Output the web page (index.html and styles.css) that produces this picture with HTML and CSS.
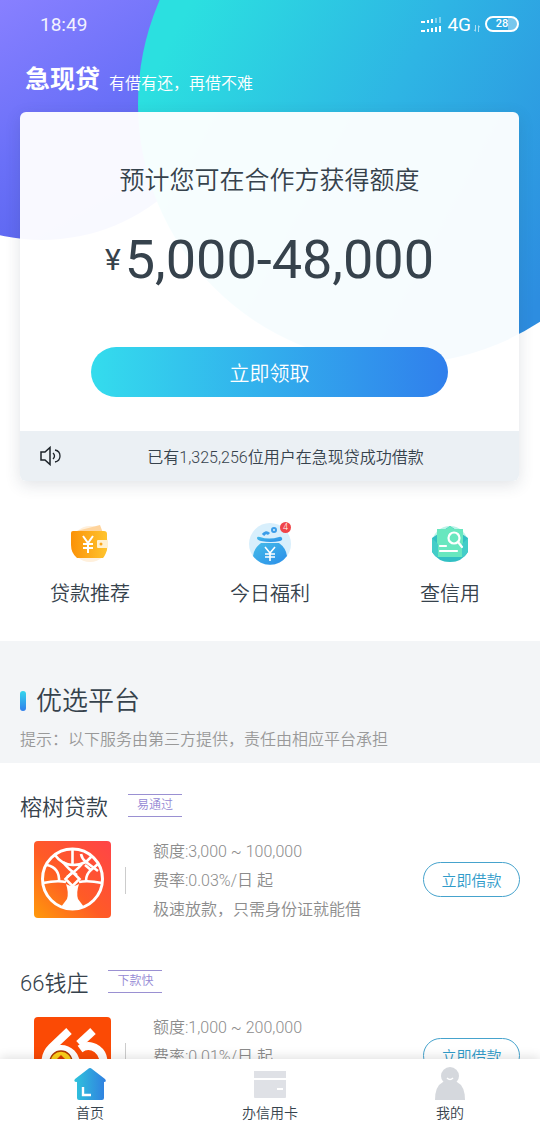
FILE: index.html
```
<!DOCTYPE html>
<html lang="zh-CN">
<head>
    <meta charset="UTF-8">
    <meta name="viewport" content="width=device-width, initial-scale=1.0">
    <title>急现贷</title>
    <link rel="stylesheet" href="styles.css">
</head>
<body>
    <main class="content">
        <!-- Background circles -->
        <svg class="hero-bg" viewBox="0 0 540 380" aria-hidden="true">
            <defs>
                <linearGradient id="purple" gradientUnits="userSpaceOnUse" x1="0" y1="0" x2="130" y2="220">
                    <stop offset="0" stop-color="#8880ff"/>
                    <stop offset="0.55" stop-color="#6a70f8"/>
                    <stop offset="1" stop-color="#5965ee"/>
                </linearGradient>
                <linearGradient id="cyan" gradientUnits="userSpaceOnUse" x1="165" y1="50" x2="560" y2="260">
                    <stop offset="0" stop-color="#2be0e0"/>
                    <stop offset="0.5" stop-color="#2eb5e4"/>
                    <stop offset="1" stop-color="#2d8de0"/>
                </linearGradient>
            </defs>
            <circle cx="42" cy="49" r="191" fill="url(#purple)"/>
            <circle cx="398" cy="104" r="260" fill="url(#cyan)"/>
        </svg>

        <div class="hero">
            <div class="status">
                <span class="clock">18:49</span>
                <div class="status-right">
                    <svg width="22" height="16" viewBox="0 0 22 16" fill="#fff" aria-hidden="true">
                        <path d="M1 5h4v2h-4zM7 4h2v3h-2zM11 3h2v4h-2zM1 14h4v2h-4zM7 13h2v3h-2zM11 12h2v4h-2zM15 11h2v5h-2zM19 10h2v6h-2z"/>
                        <path d="M15 2h2v5h-2zM19 1h2v6h-2z" opacity="0.4"/>
                    </svg>
                    <span class="net">4G</span>
                    <svg class="arrows" width="6" height="7" viewBox="0 0 6 7" fill="none" stroke="#fff" opacity="0.6" aria-hidden="true">
                        <path d="M1.500 0v6M0 4.500l1.500 2M4.500 7V1M6 2.500l-1.500-2"/>
                    </svg>
                    <span class="battery">28</span>
                </div>
            </div>

            <header class="brand">
                <h1>急现贷</h1>
                <p>有借有还，再借不难</p>
            </header>

            <section class="card">
                <div class="card-body">
                    <h2>预计您可在合作方获得额度</h2>
                    <p class="amount"><span>¥</span>5,000-48,000</p>
                    <button class="btn-main" type="button">立即领取</button>
                </div>
                <div class="notice">
                    <svg width="22" height="20" viewBox="0 0 22 20" fill="none" stroke="#1d2329" stroke-width="1.500" aria-hidden="true">
                        <path d="M1 6h4l5-4.500v17L5 14H1z"/>
                        <path d="M13 7q3 3 0 6M15 4q5 1 5 6t-5 6" stroke-width="1.300"/>
                    </svg>
                    <p>已有1,325,256位用户在急现贷成功借款</p>
                </div>
            </section>
        </div>

        <nav class="quick">
            <a href="#loan">
                <svg width="42" height="42" viewBox="0 0 42 42" aria-hidden="true">
                    <defs>
                        <linearGradient id="orange" x1="0" x2="1">
                            <stop offset="0" stop-color="#fb9208"/>
                            <stop offset="1" stop-color="#ffc42e"/>
                        </linearGradient>
                    </defs>
                    <circle cx="21" cy="21" r="18" fill="#fff0dc"/>
                    <path d="M4 9L31 2l3 8H6z" fill="#ffd49c"/>
                    <path d="M4 8h31q3 0 3 3v16q-2 6-4 8H8q-6-5-6-13V10q0-2 2-2z" fill="url(#orange)"/>
                    <rect x="28" y="17" width="11" height="8" rx="1" fill="#fff0d0"/>
                    <circle cx="32" cy="21" r="1.500" fill="#f9a51a"/>
                    <path d="M14 13l5 7 5-7M19 20v10M14 21h10M14 25h10" fill="none" stroke="#fff" stroke-width="2"/>
                </svg>
                贷款推荐
            </a>
            <a href="#welfare">
                <span class="icon-wrap">
                    <svg width="42" height="42" viewBox="0 0 42 42" aria-hidden="true">
                        <defs>
                            <linearGradient id="blue" x1="0" y1="0" x2="1" y2="1">
                                <stop offset="0" stop-color="#45bce9"/>
                                <stop offset="1" stop-color="#2a8de9"/>
                            </linearGradient>
                        </defs>
                        <circle cx="21" cy="21" r="21" fill="#d8effc"/>
                        <path d="M11 14q9 3 19 0q2-1 3 1t-2 3q-9 2-19 0q-4-1-4-3t3-1z" fill="url(#blue)"/>
                        <path d="M12 20h18q7 5 8 13a21 21 0 0 1-34 0q1-8 8-13z" fill="url(#blue)"/>
                        <path d="M14 12q3-4 6-1" fill="none" stroke="#3b9de9" stroke-width="3"/>
                        <circle cx="25" cy="7" r="2" fill="none" stroke="#3b9de9" stroke-width="2"/>
                        <path d="M16 24l5 6 5-6M21 30v8M16 31h10M16 34h10" fill="none" stroke="#fff" stroke-width="1.600"/>
                    </svg>
                    <span class="badge">4</span>
                </span>
                今日福利
            </a>
            <a href="#credit">
                <svg width="42" height="42" viewBox="0 0 42 42" aria-hidden="true">
                    <circle cx="21" cy="21" r="18" fill="#bdf4e8"/>
                    <path d="M3 15l18-12 18 12v14q-6 10-18 10T3 29z" fill="#32bfc4"/>
                    <path d="M8 6h9l4-3 4 3h9v28H8z" fill="#68e7bf"/>
                    <path d="M3 15l6 6v14q-6-4-6-8zM39 15l-6 6v14q6-4 6-8z" fill="#43cdc8"/>
                    <circle cx="25" cy="15" r="5.500" fill="none" stroke="#fff" stroke-width="2.200"/>
                    <path d="M29 19l4 5M11 23h6M11 28h17" stroke="#fff" stroke-width="2.200" stroke-linecap="round"/>
                </svg>
                查信用
            </a>
        </nav>

        <section class="section-head">
            <h2>优选平台</h2>
            <p>提示：以下服务由第三方提供，责任由相应平台承担</p>
        </section>

        <ul class="list">
            <li class="item">
                <div class="item-title">
                    <h3>榕树贷款</h3>
                    <span class="tag">易通过</span>
                </div>
                <div class="item-row">
                    <svg class="logo" viewBox="0 0 77 77" aria-hidden="true">
                        <defs>
                            <linearGradient id="fire" x1="0" y1="1" x2="1" y2="0">
                                <stop offset="0" stop-color="#ff9a0a"/>
                                <stop offset="0.45" stop-color="#ff5b26"/>
                                <stop offset="1" stop-color="#ff4448"/>
                            </linearGradient>
                        </defs>
                        <rect width="77" height="77" rx="4" fill="url(#fire)"/>
                        <g fill="none" stroke="#fff" stroke-width="2.600">
                            <circle cx="38.500" cy="38" r="30" stroke-width="3"/>
                            <path d="M38.500 31l7 7-7 7-7-7z"/>
                            <path d="M9 42q14-3 23-1M68 42q-14-3-23-1"/>
                            <path d="M13 24q13 3 12 17"/>
                            <path d="M21 14q7 10 18 10 7 0 13-3"/>
                            <path d="M38.500 8v16M29 21Q34 28 43 34M48 23Q43 29 33 36"/>
                            <path d="M52 40q0-7 5-11l7-6M47 13q1 5 5 8l12 9"/>
                            <path d="M52 21l6-6M57 29l-6-5"/>
                        </g>
                        <path d="M32 43q3 2 6.500 2 3.500 0 6.500-2-3 9-1 15l6 8q-12 4-23 0l6-8q2-6-1-15z" fill="#fff"/>
                    </svg>
                    <div class="info">
                        <p>额度:3,000 ~ 100,000</p>
                        <p>费率:0.03%/日 起</p>
                        <p>极速放款，只需身份证就能借</p>
                    </div>
                    <button class="btn-loan" type="button">立即借款</button>
                </div>
            </li>
            <li class="item">
                <div class="item-title">
                    <h3>66钱庄</h3>
                    <span class="tag">下款快</span>
                </div>
                <div class="item-row">
                    <svg class="logo" viewBox="0 0 77 77" aria-hidden="true">
                        <rect width="77" height="77" rx="4" fill="#fb4a05"/>
                        <g fill="none" stroke="#fff" stroke-width="8">
                            <path d="M59 14L45 27"/>
                            <path d="M46 32q8-6 17 0 8 6 6 17-3 12-15 12"/>
                            <path d="M35 14L18 30Q10 38 12 48"/>
                            <circle cx="27" cy="47" r="15"/>
                        </g>
                        <circle cx="27" cy="45" r="11" fill="#ffd21c" stroke="#b03a00" stroke-width="1.500"/>
                        <path d="M27 38l5 5-5 5-5-5z" fill="#d93a00"/>
                    </svg>
                    <div class="info">
                        <p>额度:1,000 ~ 200,000</p>
                        <p>费率:0.01%/日 起</p>
                    </div>
                    <button class="btn-loan" type="button">立即借款</button>
                </div>
            </li>
        </ul>
    </main>

    <nav class="tabbar">
        <a href="#home">
            <svg width="32" height="34" viewBox="0 0 32 34" aria-hidden="true">
                <defs>
                    <linearGradient id="home" x1="0" x2="1">
                        <stop offset="0" stop-color="#2fc4dc"/>
                        <stop offset="1" stop-color="#307fe0"/>
                    </linearGradient>
                </defs>
                <path d="M14 2q2-2 4 0l13 10q2 3-1 3v16q0 2-2 2H5q-2 0-2-2V15q-4 0-2-3z" fill="url(#home)"/>
                <path d="M9 20v8h8" fill="none" stroke="#fff" stroke-width="2.400"/>
            </svg>
            首页
        </a>
        <a href="#card">
            <svg width="32" height="34" viewBox="0 0 32 34" fill="#dfe1e6" aria-hidden="true">
                <path d="M0 4h32v7H0z"/>
                <path d="M0 13h32v17q0 1-1 1H1q-1 0-1-1z"/>
                <path d="M23 21h6v2h-6z" fill="#fff"/>
            </svg>
            办信用卡
        </a>
        <a href="#me">
            <svg width="32" height="34" viewBox="0 0 32 34" fill="#d5d8dd" aria-hidden="true">
                <circle cx="16" cy="9" r="9"/>
                <path d="M9 15h14q8 4 8 18H1Q1 19 9 15z"/>
                <path d="M13 11q3 3 6 0" fill="none" stroke="#fff" stroke-width="1.500"/>
            </svg>
            我的
        </a>
    </nav>
</body>
</html>
```
FILE: styles.css
```
* {
    box-sizing: border-box;
}

body {
    margin: 0;
    height: 100vh;
    display: flex;
    flex-direction: column;
    font-family: Roboto, "Noto Sans CJK SC", sans-serif;
    font-weight: 350;
    color: #36424c;
    background: #fff;
}

h1, h2, h3, p, ul {
    margin: 0;
    padding: 0;
    font-weight: 350;
}

a {
    color: inherit;
    text-decoration: none;
}

button {
    font-family: inherit;
    font-weight: 350;
    padding: 0;
    cursor: pointer;
}

.content {
    position: relative;
    flex: 1;
    min-height: 0;
    overflow-y: auto;
    scrollbar-width: none;
}

.hero-bg {
    position: absolute;
    top: 0;
    left: 0;
    width: 100%;
}

.hero {
    position: relative;
    padding: 0 21px 0 20px;
}

.status {
    display: flex;
    justify-content: space-between;
    align-items: center;
    height: 48px;
    padding-left: 20px;
    color: #fff;
}

.clock {
    font-size: 19px;
    font-weight: 400;
    opacity: 0.9;
}

.status-right {
    display: flex;
    align-items: center;
}

.net {
    margin-left: 5px;
    font-size: 19px;
    font-weight: 400;
}

.arrows {
    margin: 8px 5px 0 3px;
}

.battery {
    width: 34px;
    height: 16px;
    border: 2px solid #fff;
    border-radius: 8px;
    font-size: 11px;
    line-height: 12px;
    font-weight: 500;
    text-align: center;
    background: linear-gradient(90deg, transparent 70%, rgba(255, 255, 255, 0.35) 70%);
}

.brand {
    display: flex;
    align-items: center;
    gap: 9px;
    height: 64px;
    padding: 0 5px;
    color: #fff;
}

.brand h1 {
    font-size: 25px;
    line-height: 38px;
    font-weight: 700;
}

.brand p {
    padding-top: 4px;
    font-size: 16px;
}

.card {
    border-radius: 6px;
    overflow: hidden;
    background: rgba(255, 255, 255, 0.96);
    box-shadow: 0 4px 16px rgba(40, 60, 80, 0.14);
    text-align: center;
}

.card-body {
    padding: 50px 20px 34px;
}

.card-body h2 {
    font-size: 25px;
    line-height: 38px;
}

.amount {
    display: flex;
    justify-content: center;
    align-items: center;
    margin-top: 24px;
    font-size: 54px;
    font-weight: 400;
    line-height: 72px;
}

.amount span {
    margin-right: 4px;
    font-size: 30px;
}

.btn-main {
    width: 78%;
    max-width: 357px;
    height: 50px;
    margin-top: 51px;
    border: none;
    border-radius: 25px;
    background: linear-gradient(90deg, #34dced, #307fec);
    color: #fff;
    font-size: 20px;
}

.notice {
    display: flex;
    align-items: center;
    height: 50px;
    padding: 0 10px 0 20px;
    background: #ebf0f4;
}

.notice p {
    flex: 1;
    font-size: 16px;
}

.quick {
    position: relative;
    display: grid;
    grid-template-columns: repeat(3, 1fr);
    padding: 42px 0 32px;
}

.quick a {
    display: flex;
    flex-direction: column;
    align-items: center;
    gap: 14px;
    font-size: 20px;
    line-height: 30px;
}

.icon-wrap {
    position: relative;
    height: 42px;
}

.badge {
    position: absolute;
    top: -1px;
    right: 0;
    width: 11px;
    height: 11px;
    border-radius: 50%;
    background: #f04448;
    color: #fff;
    font-size: 9px;
    line-height: 11px;
    text-align: center;
}

.section-head {
    padding: 41px 20px 10px;
    background: #f3f5f7;
}

.section-head h2 {
    display: flex;
    align-items: center;
    gap: 10px;
    font-size: 26px;
    line-height: 38px;
}

.section-head h2::before {
    content: "";
    width: 6px;
    height: 20px;
    border-radius: 3px;
    background: linear-gradient(#34d6ec, #307fec);
}

.section-head p {
    margin-top: 7px;
    color: #999;
    font-size: 16px;
    line-height: 26px;
}

.list {
    list-style: none;
}

.item {
    padding: 27px 20px 0;
    height: 176px;
}

.item-title {
    display: flex;
    align-items: center;
    gap: 20px;
    height: 30px;
}

.item-title h3 {
    font-size: 22px;
}

.tag {
    padding: 0 9px;
    border: solid #9a90d2;
    border-width: 1px 0;
    color: #9488d4;
    font-size: 12px;
    line-height: 21px;
}

.item-row {
    display: flex;
    align-items: flex-start;
    margin-top: 17px;
    padding-left: 14px;
}

.logo {
    width: 77px;
    height: 77px;
    margin-top: 4px;
}

.info {
    flex: 1;
    display: flex;
    flex-direction: column;
    margin-left: 42px;
    color: #8c8c8c;
    font-size: 16px;
    line-height: 29px;
    position: relative;
}

.info::before {
    content: "";
    position: absolute;
    top: 30px;
    left: -28px;
    height: 27px;
    border-left: 1px solid #ccc;
}

.btn-loan {
    width: 97px;
    height: 35px;
    margin-top: 25px;
    border: 1px solid #46a3cd;
    border-radius: 18px;
    background: transparent;
    color: #2f9bca;
    font-size: 15px;
}

.tabbar {
    position: relative;
    display: grid;
    grid-template-columns: repeat(3, 1fr);
    height: 65px;
    padding-top: 8px;
    background: #fff;
    box-shadow: 0 -2px 10px rgba(0, 0, 0, 0.12);
}

.tabbar a {
    display: flex;
    flex-direction: column;
    align-items: center;
    gap: 2px;
    font-size: 14px;
    line-height: 20px;
}
```
